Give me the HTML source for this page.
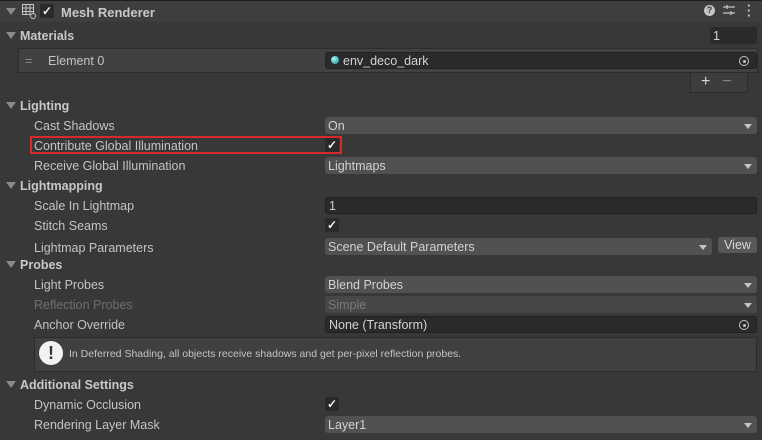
<!DOCTYPE html><html><head><style>
body{margin:0;width:762px;height:440px;background:#383838;font-family:"Liberation Sans",sans-serif;font-size:12.5px;color:#c4c4c4;position:relative;overflow:hidden}
.a{position:absolute;white-space:nowrap}
.sec{font-weight:bold;color:#c8c8c8}
.tri{position:absolute;width:0;height:0;border-left:5px solid transparent;border-right:5px solid transparent;border-top:7px solid #8a8a8a}
.dd{position:absolute;left:325px;width:432px;height:17px;background:#515151;border-radius:3px;box-sizing:border-box;padding-left:3px;line-height:18px;color:#d2d2d2}
.dd:after{content:"";position:absolute;right:5px;top:7px;border-left:4px solid transparent;border-right:4px solid transparent;border-top:5px solid #c4c4c4}
.fld{position:absolute;left:325px;width:432px;height:17px;background:#2a2a2a;border-radius:3px;box-sizing:border-box;padding-left:3px;line-height:16px;color:#d2d2d2;border:1px solid #212121}
.cb{position:absolute;left:325px;width:14px;height:14px;background:#2a2a2a;border-radius:2px;color:#f0f0f0;font-size:12px;font-weight:bold;line-height:14px;text-align:center}
.obj{position:absolute;right:7px;top:3px;width:8px;height:8px;border:1.5px solid #c4c4c4;border-radius:50%}
.obj:after{content:"";position:absolute;left:2.5px;top:2.5px;width:3px;height:3px;background:#c4c4c4;border-radius:50%}
</style></head><body>
<div class="a" style="left:0;top:0;width:762px;height:1px;background:#1e1e1e"></div>
<div class="a" style="left:0;top:1px;width:762px;height:21px;background:#3e3e3e"></div>
<div class="tri" style="left:6px;top:8px"></div>
<svg class="a" style="left:21px;top:3px" width="16" height="16" viewBox="0 0 16 16" fill="none" stroke="#c4c4c4" stroke-width="1"><rect x="1.5" y="1.5" width="11" height="10"/><path d="M5 1.5v10M9 1.5v10M1.5 5h11M1.5 8.5h11"/><circle cx="12" cy="13" r="2.5" fill="#3e3e3e"/></svg>
<div class="cb" style="left:40px;top:4px">✓</div>
<div class="a sec" style="left:61px;top:5px;font-size:13px">Mesh Renderer</div>
<div class="a" style="left:704px;top:5px;width:11px;height:11px;border-radius:50%;background:#c4c4c4;color:#383838;font-size:9px;font-weight:bold;text-align:center;line-height:11px">?</div>
<svg class="a" style="left:723px;top:4px" width="12" height="13" viewBox="0 0 12 13" stroke="#c4c4c4" stroke-width="1.3"><path d="M0 3h12M0 9h12M4 1v4M8 7v4"/></svg>
<div class="a" style="left:747px;top:3px;color:#c4c4c4;font-weight:bold;font-size:13px;line-height:5px">·<br>·<br>·</div>

<div class="tri" style="left:6px;top:32px"></div><div class="a sec" style="left:20px;top:29px">Materials</div>
<div class="a" style="left:710px;top:27px;width:47px;height:17px;background:#2a2a2a;border-radius:3px;padding-left:3px;line-height:18px;color:#d2d2d2;box-sizing:border-box">1</div>
<div class="a" style="left:18px;top:48px;width:740px;height:25px;background:#414141;border:1px solid #2c2c2c;box-sizing:border-box"></div>
<div class="a" style="left:25px;top:54px;color:#8a8a8a">=</div>
<div class="a" style="left:48px;top:54px">Element 0</div>
<div class="fld" style="top:52px;padding-left:17px;line-height:17px">env_deco_dark<span class="obj"></span></div>
<div class="a" style="left:331px;top:56px;width:8px;height:8px;border-radius:50%;background:radial-gradient(circle at 35% 35%,#9ff,#2a7a8a)"></div>
<div class="a" style="left:690px;top:73px;width:58px;height:20px;background:#3d3d3d;border:1px solid #2a2a2a;border-top:none;box-sizing:border-box;color:#d8d8d8;font-size:16px;line-height:18px"><span style="margin-left:10px">+</span><span style="margin-left:12px;color:#888">−</span></div>

<div class="tri" style="left:6px;top:102px"></div><div class="a sec" style="left:20px;top:99px">Lighting</div>
<div class="a" style="left:34px;top:119px">Cast Shadows</div><div class="dd" style="top:117px">On</div>
<div class="a" style="left:34px;top:139px">Contribute Global Illumination</div><div class="cb" style="top:138px">✓</div>
<div class="a" style="left:30px;top:136px;width:312px;height:18px;border:2px solid #d42a2a;box-sizing:border-box"></div>
<div class="a" style="left:34px;top:159px">Receive Global Illumination</div><div class="dd" style="top:157px">Lightmaps</div>
<div class="tri" style="left:6px;top:182px"></div><div class="a sec" style="left:20px;top:179px">Lightmapping</div>
<div class="a" style="left:34px;top:199px">Scale In Lightmap</div><div class="fld" style="top:197px">1</div>
<div class="a" style="left:34px;top:219px">Stitch Seams</div><div class="cb" style="top:218px">✓</div>
<div class="a" style="left:34px;top:241px">Lightmap Parameters</div><div class="dd" style="top:238px;width:387px">Scene Default Parameters</div>
<div class="a" style="left:718px;top:237px;width:39px;height:16px;background:#585858;border-radius:3px;text-align:center;line-height:16px;color:#d8d8d8">View</div>
<div class="tri" style="left:6px;top:261px"></div><div class="a sec" style="left:20px;top:258px">Probes</div>
<div class="a" style="left:34px;top:278px">Light Probes</div><div class="dd" style="top:276px">Blend Probes</div>
<div class="a" style="left:34px;top:298px;color:#6e6e6e">Reflection Probes</div><div class="dd" style="top:296px;background:#474747;color:#7a7a7a">Simple</div>
<div class="a" style="left:34px;top:318px">Anchor Override</div><div class="fld" style="top:316px">None (Transform)<span class="obj"></span></div>
<div class="a" style="left:34px;top:337px;width:723px;height:35px;background:#404040;border:1px solid #2c2c2c;box-sizing:border-box"></div>
<div class="a" style="left:39px;top:341px;width:24px;height:24px;border-radius:50%;background:#f2f2f2;color:#333;font-weight:bold;font-size:18px;text-align:center;line-height:24px">!</div>
<div class="a" style="left:69px;top:348px;font-size:10.5px">In Deferred Shading, all objects receive shadows and get per-pixel reflection probes.</div>
<div class="tri" style="left:6px;top:381px"></div><div class="a sec" style="left:20px;top:378px">Additional Settings</div>
<div class="a" style="left:34px;top:398px">Dynamic Occlusion</div><div class="cb" style="top:397px">✓</div>
<div class="a" style="left:34px;top:418px">Rendering Layer Mask</div><div class="dd" style="top:416px">Layer1</div>
</body></html>
